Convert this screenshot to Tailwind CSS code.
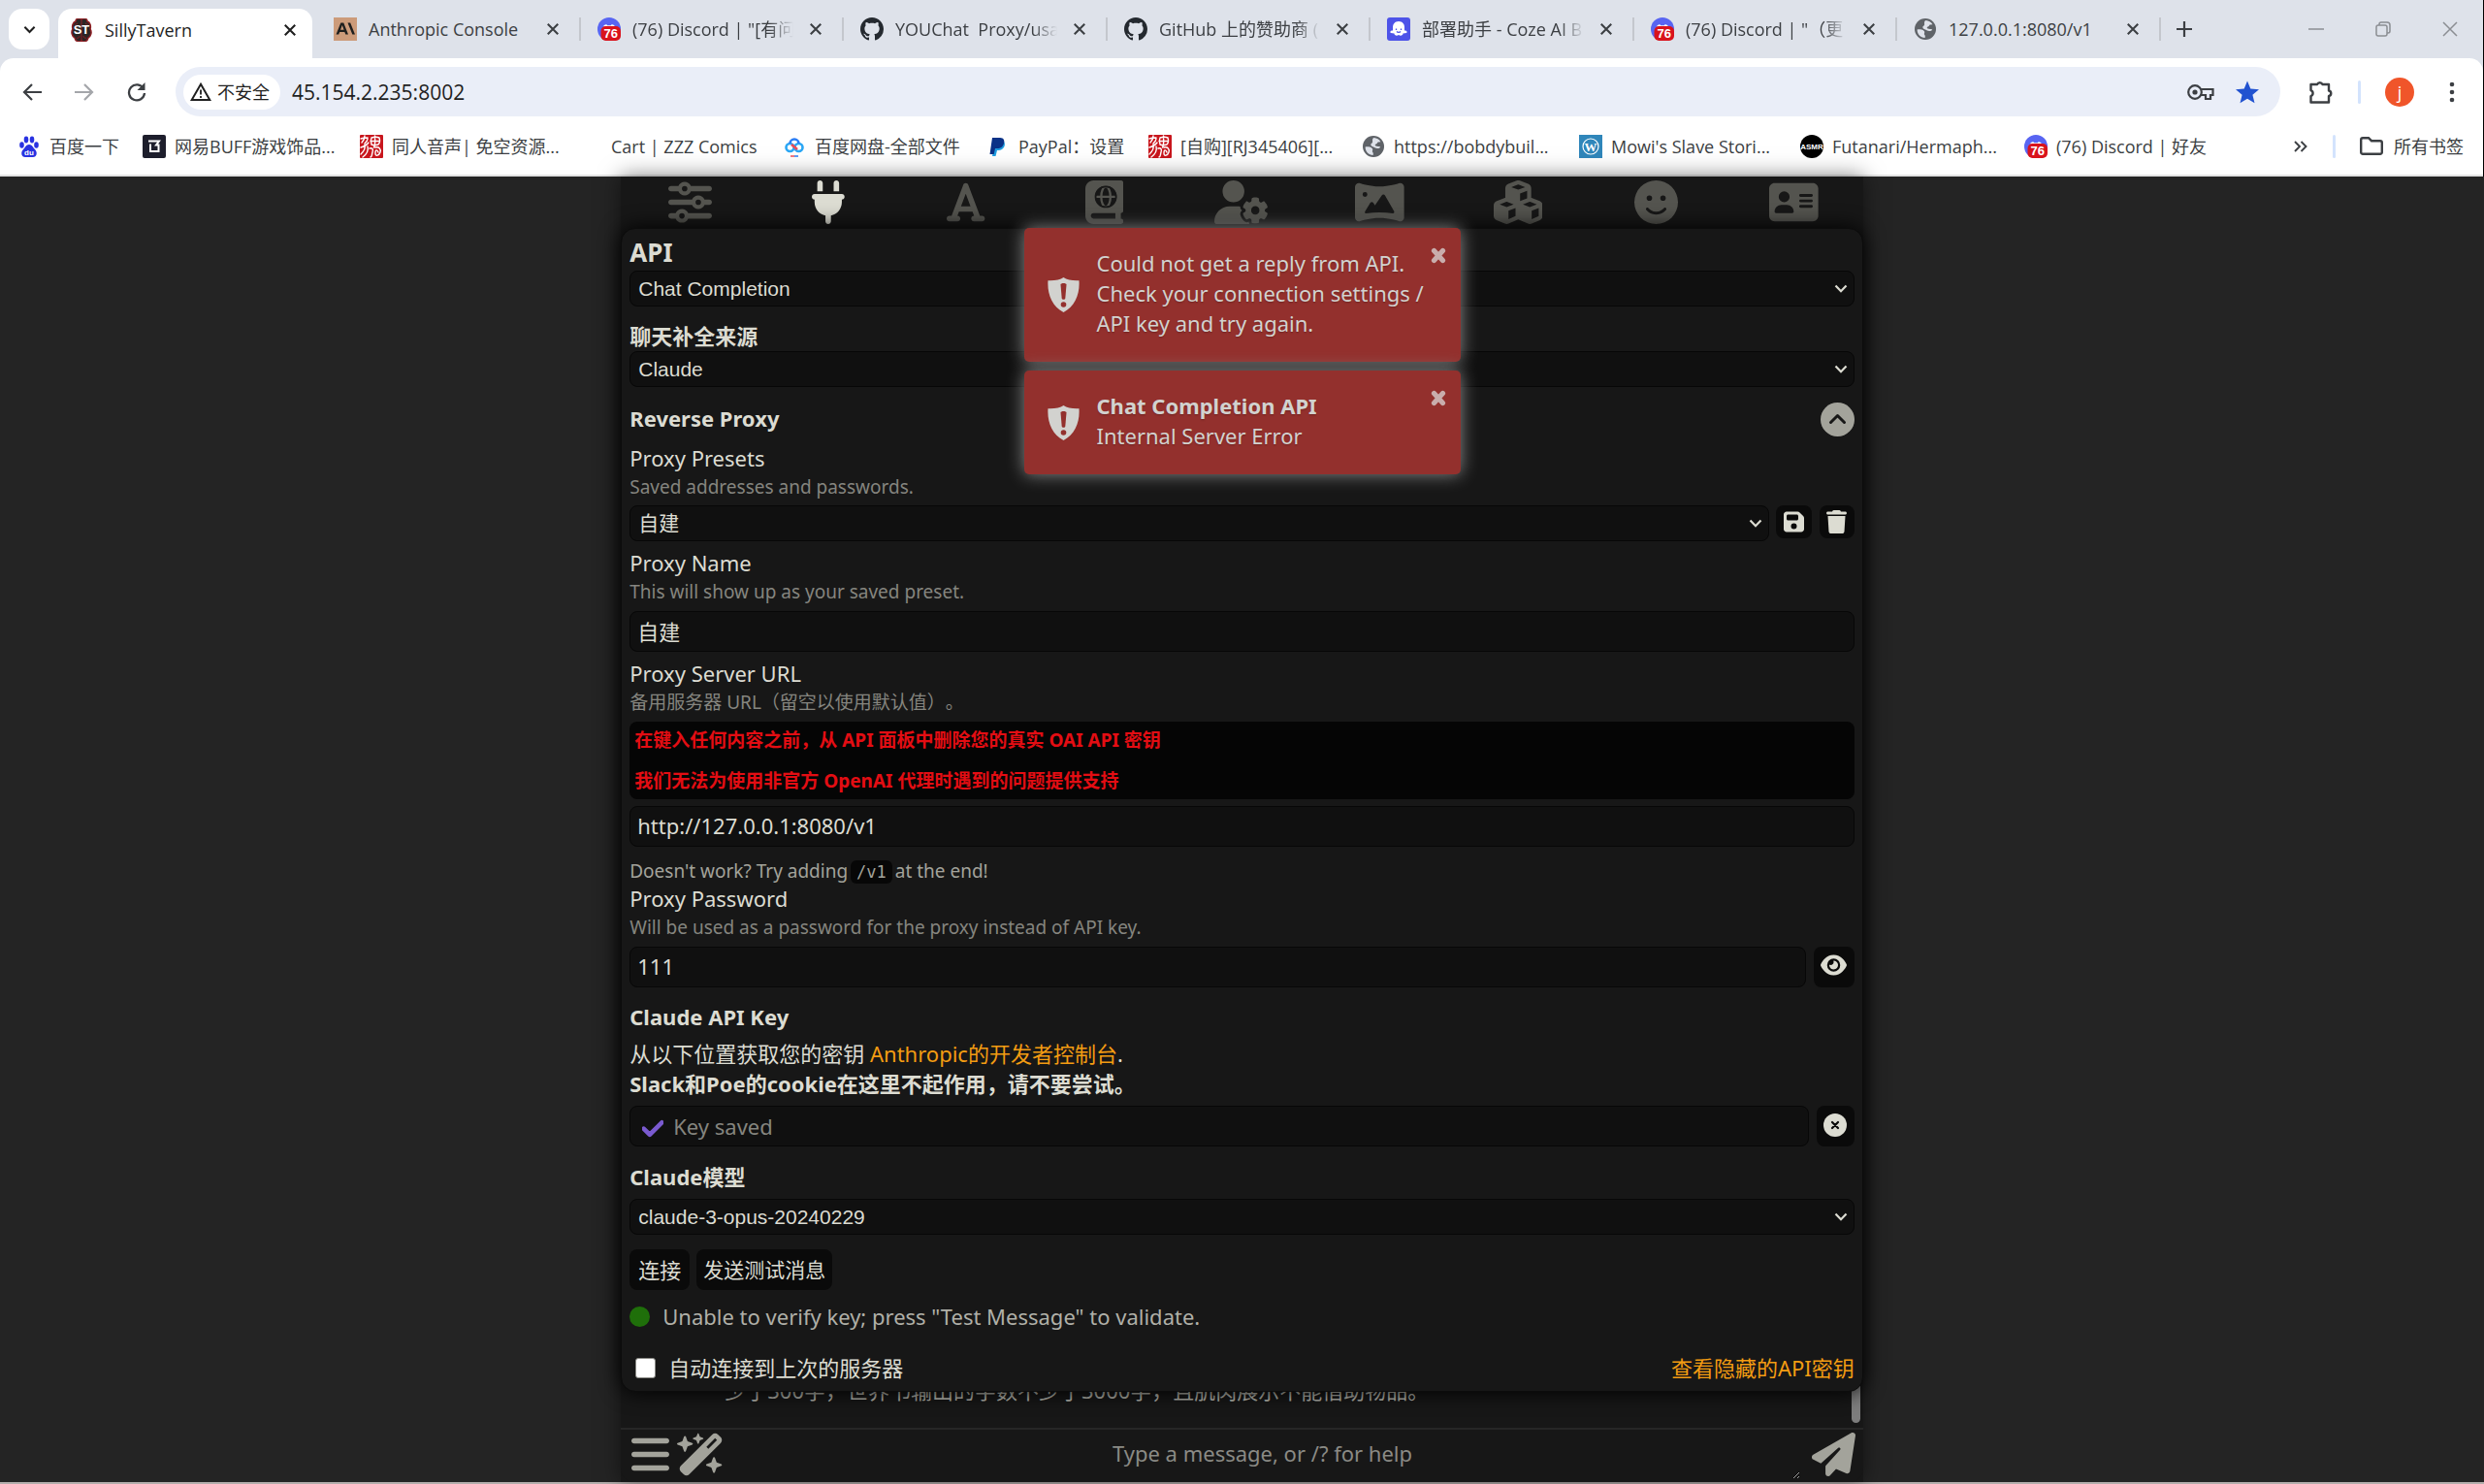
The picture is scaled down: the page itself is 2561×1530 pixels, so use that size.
<!DOCTYPE html>
<html lang="zh-CN">
<head>
    <meta charset="UTF-8">
    <meta name="viewport" content="width=device-width, initial-scale=1.0">
    <title>SillyTavern</title>
    <script src="https://cdn.jsdelivr.net/npm/@tailwindcss/browser@4"></script>
</head>
<body class="h-screen flex flex-col overflow-hidden bg-[#242424] font-['Noto_Sans','Noto_Sans_CJK_SC',sans-serif] [text-spacing-trim:space-all]">
    <!-- shared icons -->
    <svg class="hidden">
        <symbol id="i-close" viewBox="0 0 12 12"><path d="M1.5 1.5l9 9M10.5 1.5l-9 9" stroke="currentColor" stroke-width="1.8" fill="none"/></symbol>
        <symbol id="i-github" viewBox="0 0 16 16"><path fill="#24292f" d="M8 0C3.58 0 0 3.58 0 8c0 3.54 2.29 6.53 5.47 7.59.4.07.55-.17.55-.38 0-.19-.01-.82-.01-1.49-2.01.37-2.53-.49-2.69-.94-.09-.23-.48-.94-.82-1.13-.28-.15-.68-.52-.01-.53.63-.01 1.08.58 1.23.82.72 1.21 1.87.87 2.33.66.07-.52.28-.87.51-1.07-1.78-.2-3.64-.89-3.64-3.95 0-.87.31-1.59.82-2.15-.08-.2-.36-1.02.08-2.12 0 0 .67-.21 2.2.82.64-.18 1.32-.27 2-.27s1.36.09 2 .27c1.53-1.04 2.2-.82 2.2-.82.44 1.1.16 1.92.08 2.12.51.56.82 1.27.82 2.15 0 3.07-1.87 3.75-3.65 3.95.29.25.54.73.54 1.48 0 1.07-.01 1.93-.01 2.2 0 .21.15.46.55.38A8.01 8.01 0 0 0 16 8c0-4.42-3.58-8-8-8z"/></symbol>
        <symbol id="i-discord" viewBox="0 0 24 24">
            <circle cx="12" cy="12" r="12" fill="#5865f2"/>
            <path d="M6 9.5c0-1.5 2.4-2.6 3.4-2.2l.8 1h3.6l.8-1c1-.4 3.4.7 3.4 2.2z" fill="#fff"/>
            <rect x="3.5" y="9" width="20.5" height="15" rx="5" fill="#d9131c"/>
            <text x="13.8" y="21" text-anchor="middle" font-family="Liberation Sans" font-weight="bold" font-size="13" fill="#fff">76</text>
        </symbol>
        <symbol id="i-globe" viewBox="0 0 24 24">
            <circle cx="12" cy="12" r="11" fill="#5f6368"/>
            <path d="M4.5 12.2c3 0 5 .3 6.200 1.700 1.400 1.600-.6 2.600.6 4.100.8 1 .5 2.300.3 3-4.600-.2-8-4-8-8.600zM12.500 3c3 .2 5.500 1.700 7 4.200l-2.600.3c-1 .1-.8 1.800-2 2-1.500.300-1.400 1.500-.4 2 1.600.8 3.300-.2 4.800 1.300-1.200 1.400-4 1.800-5.800.5-2-1.400-4-1-4.200-3 0-1.500 1.700-1.500 1.800-3 0-1.700-.6-3.300 1.400-4.300z" fill="#dee2ea"/>
        </symbol>
        <symbol id="i-seal" viewBox="0 0 24 24">
            <rect width="24" height="24" rx="1" fill="#c8161d"/>
            <path d="M1 4c2-1 4-1 7-1M5 1c0 3-1 5-3 7M8 4c0 2-1 3-3 5M1 13c3-1 6-2 8-5M5 10c1 3-1 7-4 10M8 12c1 4-1 8-5 11M12 3c3-1 6-1 8 0 1 3 1 5-1 7-3 1-5 1-7 0-1-3-1-5 0-7zM11 6.500h9M15.500 1c0 4 1 8-1 12M10 14c3-1 4 1 3 4s0 4-2 5M16 13c4-1 6 2 5 5s-5 5-5 1 2-4 3-1" stroke="#fff" stroke-width="1.400" stroke-linecap="round" fill="none"/>
        </symbol>
        <symbol id="i-down" viewBox="0 0 14 9"><path d="M1.500 1.500L7 7.200l5.500-5.700" stroke="currentColor" stroke-width="2.200" fill="none"/></symbol>
        <symbol id="i-shield" viewBox="0 0 33 36">
            <path d="M16.500 0c3.500 2.400 9.500 3.600 16 3.200C33.500 17 28.500 30 16.500 36 4.500 30-.5 17 .5 3.200 7 3.600 13 2.400 16.500 0z" fill="currentColor"/>
            <path d="M13.500 7.500c0-2 6-2 6 0l-1.200 14c-.2 1.800-3.400 1.800-3.600 0z" fill="#93302d"/>
            <circle cx="16.500" cy="28" r="2.800" fill="#93302d"/>
        </symbol>
        <symbol id="i-x" viewBox="0 0 16 17"><path d="M3.500 3.500l9 10M12.500 3.500l-9 10" stroke="currentColor" stroke-width="5.200" stroke-linecap="round"/></symbol>
    </svg>

    <!-- browser chrome -->
    <header class="shrink-0 bg-[#dee2ea] border-r border-black font-['Open_Sans','Noto_Sans_CJK_SC',sans-serif] text-[18px] leading-6 text-[#3c3f43]">
        <div class="flex items-center h-[60px] pl-[9px] overflow-hidden">
            <button class="flex items-center justify-center size-[42px] rounded-[14px] bg-white text-[#1f1f1f]" aria-label="搜索标签页">
                <svg class="w-[13px] h-[9px]"><use href="#i-down"/></svg>
            </button>
            <div class="flex items-center self-end w-[262px] h-[51px] ml-[9px] pl-3 pr-4 pb-2 rounded-t-[14px] bg-white text-[#1f1f1f]">
                <svg class="size-6 shrink-0" viewBox="0 0 24 24">
                    <path d="M12 1c2-2 6-1 6 2 3 1 4 5 3 8 2 3 1 7-2 9-1 4-5 5-7 3-2 2-6 1-7-3-3-2-4-6-2-9-1-3 0-7 3-8 0-3 4-4 6-2z" fill="#2b2626" stroke="#8d1f24" stroke-width="1.500"/>
                    <path d="M12 1v22M8 5c-3 1-3 4-1 4M16 5c3 1 3 4 1 4M7 20c2 1 3-1 3-2M17 20c-2 1-3-1-3-2" stroke="#8d1f24" fill="none"/>
                    <text x="12" y="16" text-anchor="middle" font-family="Liberation Sans" font-weight="bold" font-size="13" fill="#fff">ST</text>
                </svg>
                <span class="flex-1 ml-3">SillyTavern</span>
                <button aria-label="关闭"><svg class="size-[14px]"><use href="#i-close"/></svg></button>
            </div>
            <div class="flex items-center flex-1">
                <div class="flex items-center w-[277px] h-6 pl-[22px] pr-5 border-r-2 border-[#c4c7cd]">
                    <svg class="size-6 shrink-0" viewBox="0 0 24 24"><rect width="24" height="24" fill="#cc9b7a"/><path d="M2.500 17.500L7.300 5.500h3l4.700 12h-2.700l-1-2.600H6.200l-1 2.600zM7 12.700h3.600L8.800 8zM14.500 5.500h2.700l4.800 12h-2.700z" fill="#1f1f1e"/></svg>
                    <span class="flex-1 ml-3 overflow-hidden whitespace-nowrap">Anthropic Console</span>
                    <button class="ml-2" aria-label="关闭"><svg class="size-[14px]"><use href="#i-close"/></svg></button>
                </div>
                <div class="flex items-center w-[271px] h-6 pl-[17px] pr-5 border-r-2 border-[#c4c7cd]">
                    <svg class="size-6 shrink-0"><use href="#i-discord"/></svg>
                    <span class="flex-1 ml-3 overflow-hidden whitespace-nowrap mask-r-from-85% mask-r-to-100%">(76) Discord | "[有问</span>
                    <button class="ml-4" aria-label="关闭"><svg class="size-[14px]"><use href="#i-close"/></svg></button>
                </div>
                <div class="flex items-center w-[272px] h-6 pl-[17px] pr-5 border-r-2 border-[#c4c7cd]">
                    <svg class="size-6 shrink-0"><use href="#i-github"/></svg>
                    <span class="flex-1 ml-3 overflow-hidden whitespace-nowrap mask-r-from-85% mask-r-to-100%">YOUChat&nbsp; Proxy/usa</span>
                    <button class="ml-4" aria-label="关闭"><svg class="size-[14px]"><use href="#i-close"/></svg></button>
                </div>
                <div class="flex items-center w-[271px] h-6 pl-[17px] pr-5 border-r-2 border-[#c4c7cd]">
                    <svg class="size-6 shrink-0"><use href="#i-github"/></svg>
                    <span class="flex-1 ml-3 overflow-hidden whitespace-nowrap mask-r-from-85% mask-r-to-100%">GitHub 上的赞助商 (</span>
                    <button class="ml-4" aria-label="关闭"><svg class="size-[14px]"><use href="#i-close"/></svg></button>
                </div>
                <div class="flex items-center w-[272px] h-6 pl-[17px] pr-5 border-r-2 border-[#c4c7cd]">
                    <svg class="size-6 shrink-0" viewBox="0 0 24 24"><rect width="24" height="24" rx="3" fill="#4d53e8"/><path d="M12 4c4 0 6 3 6 6v3.500c2-.5 3.500 1.500 2 2.500l-3.500.5c0 2-2.500 3-4.500 1.500-2 1.500-4.500.5-4.500-1.500L4 16c-1.500-1 0-3 2-2.500V10c0-3 2-6 6-6z" fill="#fff"/><path d="M9.500 11.500v1.500M14.500 11.500v1.500M10 14.500c1 1.200 3 1.200 4 0" stroke="#4d53e8" stroke-width="1.300" fill="none"/></svg>
                    <span class="flex-1 ml-3 overflow-hidden whitespace-nowrap mask-r-from-85% mask-r-to-100%">部署助手 - Coze AI B</span>
                    <button class="ml-4" aria-label="关闭"><svg class="size-[14px]"><use href="#i-close"/></svg></button>
                </div>
                <div class="flex items-center w-[271px] h-6 pl-[17px] pr-5 border-r-2 border-[#c4c7cd]">
                    <svg class="size-6 shrink-0"><use href="#i-discord"/></svg>
                    <span class="flex-1 ml-3 overflow-hidden whitespace-nowrap mask-r-from-85% mask-r-to-100%">(76) Discord | "（更</span>
                    <button class="ml-4" aria-label="关闭"><svg class="size-[14px]"><use href="#i-close"/></svg></button>
                </div>
                <div class="flex items-center w-[272px] h-6 pl-[17px] pr-5 border-r-2 border-[#c4c7cd]">
                    <svg class="size-6 shrink-0"><use href="#i-globe"/></svg>
                    <span class="flex-1 ml-3 overflow-hidden whitespace-nowrap">127.0.0.1:8080/v1</span>
                    <button class="ml-4" aria-label="关闭"><svg class="size-[14px]"><use href="#i-close"/></svg></button>
                </div>
                <button class="ml-4" aria-label="新标签页"><svg class="size-4" viewBox="0 0 16 16"><path d="M8 0v16M0 8h16" stroke="#3c3f43" stroke-width="2.200"/></svg></button>
            </div>
            <div class="flex items-center gap-[53px] pr-[26px] text-[#8b8e93]">
                <button aria-label="最小化"><svg class="size-4" viewBox="0 0 16 16"><path d="M0 8h16" stroke="currentColor" stroke-width="1.500"/></svg></button>
                <button aria-label="还原"><svg class="size-4" viewBox="0 0 16 16"><rect x="1" y="4" width="11" height="11" rx="2" fill="none" stroke="currentColor" stroke-width="1.500"/><path d="M4 4V3a2 2 0 0 1 2-2h6a3 3 0 0 1 3 3v6a2 2 0 0 1-2 2h-1" fill="none" stroke="currentColor" stroke-width="1.500"/></svg></button>
                <button aria-label="关闭窗口"><svg class="size-4" viewBox="0 0 16 16"><path d="M1 1l14 14M15 1L1 15" stroke="currentColor" stroke-width="1.500"/></svg></button>
            </div>
        </div>

        <div class="rounded-t-[14px] bg-white border-b-2 border-[#e3e3e3]">
            <div class="flex items-center h-[69px] pl-[23px] pr-[29px]">
                <button aria-label="后退"><svg class="w-5 h-[18px]" viewBox="0 0 20 18"><path d="M10 1L2 9l8 8M2 9h18" stroke="#3c3f43" stroke-width="2.200" fill="none"/></svg></button>
                <button class="ml-[34px]" aria-label="前进"><svg class="w-5 h-[18px]" viewBox="0 0 20 18"><path d="M10 1l8 8-8 8M18 9H0" stroke="#a4a6aa" stroke-width="2.200" fill="none"/></svg></button>
                <button class="ml-[34px]" aria-label="重新加载"><svg class="size-5" viewBox="0 0 20 20"><path d="M17 6.500A8 8 0 1 0 18 11" stroke="#3c3f43" stroke-width="2.300" fill="none"/><path d="M18.500 0v8h-8z" fill="#3c3f43"/></svg></button>
                <div class="flex items-center flex-1 h-[51px] ml-[30px] pl-2 pr-[22px] rounded-full bg-[#eaeef8] text-[#1f1f1f]">
                    <span class="flex items-center gap-[6px] h-9 px-[7px] pr-[11px] rounded-full bg-white">
                        <svg class="w-[22px] h-[19px]" viewBox="0 0 22 19"><path d="M11 1.800L20.300 18H1.700z" stroke="#1f1f1f" stroke-width="2" fill="none"/><path d="M11 7.500v5M11 14v2" stroke="#1f1f1f" stroke-width="1.800"/></svg>
                        不安全
                    </span>
                    <label class="sr-only" for="address">地址</label>
                    <input id="address" class="flex-1 ml-3 text-[21px] outline-none" value="45.154.2.235:8002">
                    <svg class="w-7 h-[18px]" viewBox="0 0 28 18"><circle cx="8" cy="9" r="6.800" stroke="#3c3f43" stroke-width="2.200" fill="none"/><circle cx="8" cy="9" r="2.600" fill="#3c3f43"/><path d="M14 6h12.500v6H24v4h-5v-4h-5" stroke="#3c3f43" stroke-width="2.200" fill="none"/></svg>
                    <svg class="size-6 ml-[22px]" viewBox="0 0 24 24"><path d="M12 .5l3.300 8 8.700.7-6.600 5.600 2.100 8.500L12 18.700l-7.500 4.600 2.100-8.500L0 9.200l8.700-.7z" fill="#2152d0"/></svg>
                </div>
                <button class="ml-[29px]" aria-label="扩展程序"><svg class="size-[25px]" viewBox="0 0 25 25"><path d="M2.500 5h6.500a3 3 0 0 1 5.500 0H21v6.500a2.800 2.800 0 0 1 0 5.500v6.500H2.500V17a3.200 3.200 0 0 0 0-6z" stroke="#3c3f43" stroke-width="2.400" stroke-linejoin="round" fill="none"/></svg></button>
                <span class="w-[3px] h-6 ml-[26px] rounded bg-[#d3e3fd]"></span>
                <button class="flex items-center justify-center size-[30px] ml-[25px] rounded-full bg-[#f0552a] text-white">j</button>
                <button class="ml-9" aria-label="菜单"><svg class="w-[6px] h-[22px]" viewBox="0 0 6 22"><g fill="#3c3f43"><circle cx="3" cy="3" r="2.300"/><circle cx="3" cy="11" r="2.300"/><circle cx="3" cy="19" r="2.300"/></g></svg></button>
            </div>
            <nav class="flex items-center h-[51px] pb-2 pl-[18px] pr-5 whitespace-nowrap">
                <a href="#" class="flex items-center gap-[9px] w-[129px]">
                    <svg class="size-6 shrink-0" viewBox="0 0 24 24"><g fill="#2932e1"><ellipse cx="4.500" cy="10.500" rx="2.300" ry="3.200"/><ellipse cx="9" cy="5" rx="2.300" ry="3.400"/><ellipse cx="15" cy="5" rx="2.300" ry="3.400"/><ellipse cx="19.500" cy="10.500" rx="2.300" ry="3.200"/><path d="M12 10c3 0 4 3 6 5 3 3 2 8-2 8H8c-4 0-5-5-2-8 2-2 3-5 6-5z"/></g><text x="12" y="20.500" text-anchor="middle" font-family="Liberation Sans" font-weight="bold" font-size="8" fill="#fff">du</text></svg>
                    百度一下
                </a>
                <a href="#" class="flex items-center gap-[9px] w-[224px]">
                    <svg class="size-6 shrink-0" viewBox="0 0 24 24"><rect width="24" height="24" rx="2" fill="#1d1e2c"/><path d="M6 6.500h11l-3 4h2.500V17H8V9.500" stroke="#fff" stroke-width="2" fill="none"/></svg>
                    网易BUFF游戏饰品...
                </a>
                <a href="#" class="flex items-center gap-[9px] w-[226px]"><svg class="size-6 shrink-0"><use href="#i-seal"/></svg>同人音声| 免空资源...</a>
                <a href="#" class="flex items-center w-[210px] pl-[33px]">Cart | ZZZ Comics</a>
                <a href="#" class="flex items-center gap-[9px] w-[210px]">
                    <svg class="size-6 shrink-0" viewBox="0 0 24 24"><g fill="none" stroke-width="2.600"><circle cx="7.500" cy="13" r="4" stroke="#2ba7f5"/><circle cx="16.500" cy="13" r="4" stroke="#2ba7f5"/><path d="M7.500 9a4.500 4.500 0 1 1 9 0" stroke="#2b7df5"/><path d="M9 10l6 5" stroke="#ef4c57"/></g><path d="M8 22h4" stroke="#ef4c57" stroke-width="1.500"/><path d="M12 22h4" stroke="#2b7df5" stroke-width="1.500"/></svg>
                    百度网盘-全部文件
                </a>
                <a href="#" class="flex items-center gap-[9px] w-[167px]">
                    <svg class="size-6 shrink-0" viewBox="0 0 24 24"><path d="M9 7h9c2 2 1 8-5 9h-2l-1.500 6H6z" fill="#1e9de0"/><path d="M6 3h8c4 0 5 3 4 6s-3 5-7 5H9l-1.300 6H3.500z" fill="#0b3287"/></svg>
                    PayPal：设置
                </a>
                <a href="#" class="flex items-center gap-[9px] w-[220px]"><svg class="size-6 shrink-0"><use href="#i-seal"/></svg>[自购][RJ345406][...</a>
                <a href="#" class="flex items-center gap-[9px] w-[224px]"><svg class="size-6 shrink-0"><use href="#i-globe"/></svg>https://bobdybuil...</a>
                <a href="#" class="flex items-center gap-[9px] w-[228px]">
                    <svg class="size-6 shrink-0" viewBox="0 0 24 24"><rect width="24" height="24" fill="#2f86ba"/><circle cx="12" cy="12" r="8" fill="none" stroke="#fff" stroke-width="1.200"/><text x="12" y="16.500" text-anchor="middle" font-family="Liberation Serif" font-weight="bold" font-size="13" fill="#fff">W</text></svg>
                    Mowi's Slave Stori...
                </a>
                <a href="#" class="flex items-center gap-[9px] w-[231px]">
                    <svg class="size-6 shrink-0" viewBox="0 0 24 24"><circle cx="12" cy="12" r="12" fill="#000"/><text x="12" y="15" text-anchor="middle" font-family="Liberation Sans" font-weight="bold" font-size="8" fill="#fff">ASMR</text></svg>
                    Futanari/Hermaph...
                </a>
                <a href="#" class="flex items-center gap-[9px] flex-1"><svg class="size-6 shrink-0"><use href="#i-discord"/></svg>(76) Discord | 好友</a>
                <button aria-label="更多书签"><svg class="w-[14px] h-3" viewBox="0 0 14 12"><path d="M1 1l5 5-5 5M7.500 1l5 5-5 5" stroke="#3c3f43" stroke-width="1.900" fill="none"/></svg></button>
                <span class="w-[3px] h-6 ml-[26px] mr-[25px] rounded bg-[#d3e3fd]"></span>
                <a href="#" class="flex items-center gap-[11px]">
                    <svg class="w-6 h-[19px]" viewBox="0 0 24 19"><path d="M1.200 3a1.800 1.800 0 0 1 1.800-1.800h6l3 3h9A1.800 1.800 0 0 1 22.800 6v10a1.800 1.800 0 0 1-1.800 1.800H3A1.800 1.800 0 0 1 1.200 16z" stroke="#3c3f43" stroke-width="2.400" fill="none"/></svg>
                    所有书签
                </a>
            </nav>
        </div>
    </header>

    <!-- app -->
    <main class="flex flex-col flex-1 min-h-0 relative w-1/2 mx-auto bg-[#171717] text-[#dcdcd2] text-[22px] leading-[31px] shadow-[0_0_21px_rgba(0,0,0,0.5)]">
        <nav class="grid grid-cols-9 place-items-center shrink-0 h-[53px] text-[#54544f]">
            <svg class="size-[45px]" viewBox="0 0 512 512" fill="currentColor"><path d="M0 416c0 17.700 14.300 32 32 32l54.700 0c12.300 28.300 40.500 48 73.300 48s61-19.700 73.300-48L480 448c17.700 0 32-14.300 32-32s-14.300-32-32-32l-246.700 0c-12.300-28.300-40.500-48-73.300-48s-61 19.700-73.300 48L32 384c-17.700 0-32 14.300-32 32zm128 0a32 32 0 1 1 64 0 32 32 0 1 1 -64 0zM320 256a32 32 0 1 1 64 0 32 32 0 1 1 -64 0zm32-80c-32.800 0-61 19.700-73.300 48L32 224c-17.700 0-32 14.300-32 32s14.300 32 32 32l246.700 0c12.300 28.300 40.500 48 73.300 48s61-19.700 73.300-48l54.700 0c17.700 0 32-14.300 32-32s-14.300-32-32-32l-54.700 0c-12.300-28.300-40.500-48-73.300-48zM192 128a32 32 0 1 1 0-64 32 32 0 1 1 0 64zm73.300-64C253 35.700 224.800 16 192 16s-61 19.700-73.300 48L32 64C14.300 64 0 78.300 0 96s14.300 32 32 32l86.700 0c12.300 28.300 40.500 48 73.300 48s61-19.700 73.300-48L480 128c17.700 0 32-14.300 32-32s-14.300-32-32-32L265.300 64z"/></svg>
            <svg class="h-[45px] text-[#dcdcd2]" viewBox="0 0 384 512" fill="currentColor"><path d="M96 0C78.300 0 64 14.300 64 32l0 96 64 0 0-96c0-17.700-14.300-32-32-32zM288 0c-17.700 0-32 14.300-32 32l0 96 64 0 0-96c0-17.700-14.300-32-32-32zM32 160c-17.700 0-32 14.300-32 32s14.300 32 32 32l0 32c0 77.400 55 142 128 156.800l0 67.200c0 17.700 14.300 32 32 32s32-14.300 32-32l0-67.200C297 398 352 333.400 352 256l0-32c17.700 0 32-14.300 32-32s-14.300-32-32-32L32 160z"/></svg>
            <svg class="h-[45px]" viewBox="0 0 448 512" fill="currentColor"><path d="M254 52.800C249.300 40.300 237.300 32 224 32s-25.300 8.300-30 20.800L57.800 416 32 416c-17.700 0-32 14.300-32 32s14.300 32 32 32l96 0c17.700 0 32-14.300 32-32s-14.300-32-32-32l-1.800 0 18-48 159.600 0 18 48-1.800 0c-17.700 0-32 14.300-32 32s14.300 32 32 32l96 0c17.700 0 32-14.300 32-32s-14.300-32-32-32l-25.800 0L254 52.800zM279.800 304l-111.600 0L224 155.100 279.800 304z"/></svg>
            <svg class="h-[45px]" viewBox="0 0 448 512"><path fill="currentColor" fill-rule="evenodd" d="M0 96C0 43 43 0 96 0H416c17.700 0 32 14.300 32 32V352c0 17.700-14.300 32-32 32v64c17.700 0 32 14.300 32 32s-14.300 32-32 32H96c-53 0-96-43-96-96V96zM64 416c0 17.700 14.300 32 32 32H352V384H96c-17.700 0-32 14.300-32 32z"/><circle cx="240" cy="192" r="126" fill="#171717"/><g fill="none" stroke="currentColor" stroke-width="26"><path d="M114 192h252"/><ellipse cx="240" cy="192" rx="54" ry="120"/></g><circle cx="240" cy="192" r="120" fill="none" stroke="#171717" stroke-width="20"/></svg>
            <svg class="h-[45px]" viewBox="0 0 640 512" fill="currentColor"><path d="M224 0a128 128 0 1 1 0 256A128 128 0 1 1 224 0zM178.300 304h91.400c11.800 0 23.400 1.200 34.500 3.300c-2.100 18.500 7.400 35.600 21.800 44.800c-16.600 10.600-26.700 31.600-20 53.300c4 12.900 9.400 25.500 16.400 37.600s15.200 23.100 24.400 33c15.700 16.900 39.600 18.400 57.200 8.700v.9c0 9.200 2.700 18.500 7.900 26.300H29.700C13.300 512 0 498.700 0 482.300C0 383.800 79.800 304 178.300 304zM436 218.200c0-7 4.500-13.300 11.300-14.800c10.500-2.400 21.500-3.700 32.700-3.700s22.200 1.300 32.700 3.700c6.800 1.500 11.300 7.800 11.300 14.800v17.700c0 7.800 4.800 14.800 11.600 18.700c6.800 3.900 15.100 4.500 21.800 .6l13.800-7.900c6.100-3.500 13.700-2.700 18.500 2.400c7.600 8.100 14.300 17.200 20.100 27.200s10.300 20.400 13.500 31c2.100 6.700-1.100 13.700-7.200 17.200l-14.400 8.300c-6.500 3.700-10 10.900-10 18.400s3.500 14.700 10 18.400l14.400 8.300c6.100 3.500 9.200 10.500 7.200 17.200c-3.300 10.600-7.800 21-13.500 31s-12.500 19.100-20.100 27.200c-4.800 5.100-12.500 5.900-18.500 2.400l-13.800-7.900c-6.700-3.900-15.100-3.300-21.800 .6c-6.800 3.900-11.600 10.900-11.600 18.700v17.700c0 7-4.500 13.300-11.300 14.800c-10.500 2.400-21.500 3.700-32.700 3.700s-22.200-1.300-32.700-3.700c-6.800-1.500-11.300-7.800-11.300-14.800V467.800c0-7.900-4.900-14.900-11.700-18.900c-6.800-3.900-15.200-4.500-22-.6l-13.500 7.800c-6.100 3.500-13.700 2.700-18.500-2.400c-7.600-8.100-14.300-17.200-20.100-27.200s-10.300-20.400-13.500-31c-2.100-6.700 1.100-13.700 7.200-17.200l14-8.100c6.500-3.800 10.100-11.100 10.100-18.600s-3.500-14.800-10.100-18.600l-14-8.100c-6.100-3.500-9.200-10.500-7.200-17.200c3.300-10.600 7.700-21 13.500-31s12.500-19.100 20.100-27.200c4.800-5.100 12.400-5.900 18.500-2.400l13.600 7.800c6.800 3.900 15.200 3.300 22-.6c6.900-3.900 11.700-11 11.700-18.900V218.200zm92.100 133.500a48.100 48.100 0 1 0 -96.100 0 48.100 48.100 0 1 0 96.100 0z"/></svg>
            <svg class="h-[45px]" viewBox="0 0 576 512" fill="currentColor" fill-rule="evenodd"><path d="M45.600 32C20.400 32 0 52.400 0 77.600V434.400C0 459.600 20.400 480 45.600 480c5.100 0 10-.8 14.700-2.400C74.600 472.800 177.600 440 288 440s213.400 32.800 227.700 37.600c4.700 1.600 9.700 2.400 14.700 2.400C555.600 480 576 459.600 576 434.400V77.600C576 52.400 555.600 32 530.400 32c-5.100 0-10 .8-14.700 2.400C501.400 39.200 398.400 72 288 72S74.600 39.200 60.300 34.400C55.600 32.800 50.700 32 45.600 32zM333 166c7 0 14 4 19 11L458 362c6 13-1 27-16 25-100-14-208-14-308 0-15 2-23-12-16-24l62-100c9-13 25-13 34 0l20 30 80-116c5-7 12-11 19-11zM117 136a28 28 0 1 1 0 56 28 28 0 1 1 0-56z"/></svg>
            <svg class="h-[45px]" viewBox="0 0 576 512" fill="currentColor"><path d="M290.800 48.600l78.400 29.700L288 109.500 206.800 78.300l78.400-29.700c1.800-.7 3.800-.7 5.700 0zM136 92.500V204.700c-1.300 .4-2.600 .8-3.900 1.300l-96 36.400C14.400 250.600 0 271.500 0 294.700V413.900c0 22.200 13.100 42.300 33.500 51.300l96 42.200c14.400 6.300 30.700 6.300 45.100 0L288 457.500l113.500 49.900c14.400 6.300 30.700 6.300 45.100 0l96-42.200c20.300-8.900 33.500-29.100 33.500-51.300V294.700c0-23.300-14.400-44.100-36.100-52.400l-96-36.400c-1.300-.5-2.600-.9-3.900-1.300V92.500c0-23.300-14.400-44.100-36.100-52.400l-96-36.400c-12.800-4.800-26.900-4.800-39.700 0l-96 36.400C150.400 48.400 136 69.300 136 92.500zM392 210.600l-82.400 31.200V152.600L392 121v89.600zM154.800 250.900l78.400 29.700L152 311.700 70.800 280.600l78.400-29.700c1.800-.7 3.800-.7 5.700 0zm18.800 204.400V354.800L256 323.200v95.900l-82.400 36.200zM421.200 250.900c1.800-.7 3.800-.7 5.700 0l78.400 29.700L424 311.700l-81.200-31.100 78.400-29.700zM523.200 421.200l-77.600 34.100V354.800L528 323.200v90.700c0 3.200-1.900 6-4.800 7.300z"/></svg>
            <svg class="h-[45px]" viewBox="0 0 512 512" fill="currentColor"><path d="M256 512A256 256 0 1 0 256 0a256 256 0 1 0 0 512zM164.100 325.500C182 346.200 212.600 368 256 368s74-21.800 91.900-42.500c5.800-6.700 15.900-7.400 22.600-1.600s7.400 15.900 1.600 22.600C349.800 372.100 311.100 400 256 400s-93.800-27.900-116.100-53.500c-5.800-6.700-5.100-16.800 1.600-22.600s16.800-5.100 22.600 1.600zM144.400 208a32 32 0 1 1 64 0 32 32 0 1 1 -64 0zm192-32a32 32 0 1 1 0 64 32 32 0 1 1 0-64z"/></svg>
            <svg class="h-[45px]" viewBox="0 0 576 512" fill="currentColor"><path d="M64 32C28.700 32 0 60.700 0 96V416c0 35.300 28.700 64 64 64H512c35.300 0 64-28.700 64-64V96c0-35.300-28.700-64-64-64H64zm80 256h64c44.200 0 80 35.800 80 80c0 8.800-7.200 16-16 16H80c-8.800 0-16-7.200-16-16c0-44.200 35.800-80 80-80zm-32-96a64 64 0 1 1 128 0 64 64 0 1 1 -128 0zm256-32H496c8.800 0 16 7.200 16 16s-7.200 16-16 16H368c-8.800 0-16-7.200-16-16s7.200-16 16-16zm0 64H496c8.800 0 16 7.200 16 16s-7.200 16-16 16H368c-8.800 0-16-7.200-16-16s7.200-16 16-16zm0 64H496c8.800 0 16 7.200 16 16s-7.200 16-16 16H368c-8.800 0-16-7.200-16-16s7.200-16 16-16z"/></svg>
        </nav>

        <!-- chat behind the drawer -->
        <section class="flex flex-col justify-end flex-1 min-h-0 pb-[23px] pl-[107px] pr-[3px] text-[#b5b5ad]">
            <div class="flex items-end">
                <p class="flex-1">少于300字，世界书输出的字数不少于3000字，且肌肉展示不能借助物品。</p>
                <div class="w-[9px] h-20 -mb-[18px] rounded-full bg-[#7d7d7d]"></div>
            </div>
        </section>

        <form class="flex items-center shrink-0 h-[56px] pl-[11px] pr-2 pb-[3px] border-t-2 border-[#262626] bg-[#171717] rounded-b-[14px] text-[#a3a39b]">
            <button type="button" aria-label="选项"><svg class="w-[39px] h-[45px]" viewBox="0 0 448 512" fill="currentColor"><path d="M0 96C0 78.300 14.300 64 32 64H416c17.700 0 32 14.300 32 32s-14.300 32-32 32H32C14.300 128 0 113.700 0 96zM0 256c0-17.700 14.300-32 32-32H416c17.700 0 32 14.300 32 32s-14.300 32-32 32H32c-17.700 0-32-14.300-32-32zM448 416c0 17.700-14.300 32-32 32H32c-17.700 0-32-14.300-32-32s14.300-32 32-32H416c17.700 0 32 14.300 32 32z"/></svg></button>
            <button type="button" class="ml-2" aria-label="扩展"><svg class="w-[49px] h-[45px]" viewBox="0 0 576 512" fill="currentColor"><path d="M234.700 42.700L197 56.800c-3 1.100-5 4-5 7.200s2 6.100 5 7.200l37.700 14.100L248.800 123c1.100 3 4 5 7.200 5s6.100-2 7.200-5l14.100-37.700L315 71.200c3-1.100 5-4 5-7.200s-2-6.100-5-7.200L277.300 42.700 263.200 5c-1.100-3-4-5-7.200-5s-6.100 2-7.200 5L234.700 42.700zM46.100 395.400c-18.700 18.700-18.700 49.100 0 67.900l34.600 34.600c18.700 18.700 49.100 18.700 67.900 0L529.900 116.500c18.700-18.700 18.700-49.100 0-67.900L495.300 14.100c-18.700-18.700-49.100-18.700-67.900 0L46.100 395.400zM484.600 82.600l-105 105-23.300-23.300 105-105 23.300 23.300zM7.500 117.200C3 118.900 0 123.200 0 128s3 9.100 7.500 10.800L64 160l21.200 56.500c1.700 4.500 6 7.500 10.800 7.500s9.100-3 10.800-7.500L128 160l56.500-21.200c4.500-1.700 7.500-6 7.500-10.800s-3-9.100-7.500-10.800L128 96 106.800 39.500C105.100 35 100.800 32 96 32s-9.100 3-10.800 7.500L64 96 7.500 117.200zm352 256c-4.500 1.700-7.500 6-7.500 10.800s3 9.100 7.500 10.800L416 416l21.200 56.500c1.700 4.500 6 7.500 10.800 7.500s9.100-3 10.800-7.500L480 416l56.500-21.200c4.500-1.700 7.500-6 7.500-10.800s-3-9.100-7.500-10.800L480 352l-21.200-56.500c-1.700-4.500-6-7.500-10.800-7.500s-9.100 3-10.800 7.500L416 352l-56.500 21.200z"/></svg></button>
            <label class="sr-only" for="message">消息</label>
            <textarea id="message" rows="1" class="flex-1 h-[51px] py-[9px] text-center resize outline-none placeholder:text-[#8a8a85]" placeholder="Type a message, or /? for help"></textarea>
            <button type="button" class="ml-3" aria-label="发送"><svg class="size-[45px]" viewBox="0 0 512 512" fill="currentColor"><path d="M498.100 5.600c10.100 7 15.400 19.100 13.500 31.200l-64 416c-1.500 9.700-7.400 18.200-16 23s-18.900 5.400-28 1.600L284 427.700l-68.500 74.100c-8.900 9.700-22.900 12.900-35.200 8.100S160 493.200 160 480V396.400c0-4 1.500-7.800 4.200-10.700L331.800 202.800c5.800-6.300 5.600-16-.4-22s-15.700-6.400-22-.7L106 360.800 17.700 316.600C7.100 311.300 .3 300.700 0 288.900s5.900-22.800 16.100-28.700l448-256c10.700-6.100 23.900-5.500 34 1.400z"/></svg></button>
        </form>

        <!-- API connections drawer -->
        <section class="absolute inset-x-0 top-[53px] px-2 pt-[9px] pb-2 border border-[#0c0c0c] rounded-[15px] bg-[#171717] shadow-[0_0_21px_#000]">
            <h2 class="mb-[3px] font-bold text-[26px]"><label for="api">API</label></h2>
            <div class="relative">
                <select id="api" class="block w-full h-[37px] px-2 appearance-none rounded-lg border border-[#070707] bg-[#101010] font-['Liberation_Sans','Noto_Sans_CJK_SC',sans-serif] text-[21px] leading-6"><option>Chat Completion</option></select>
                <svg class="absolute right-[7px] top-[14px] w-[14px] h-[9px] pointer-events-none"><use href="#i-down"/></svg>
            </div>
            <h3 class="mt-[15px] font-bold"><label for="source">聊天补全来源</label></h3>
            <div class="relative">
                <select id="source" class="block w-full h-[37px] px-2 appearance-none rounded-lg border border-[#070707] bg-[#101010] font-['Liberation_Sans','Noto_Sans_CJK_SC',sans-serif] text-[21px] leading-6"><option>Claude</option></select>
                <svg class="absolute right-[7px] top-[14px] w-[14px] h-[9px] pointer-events-none"><use href="#i-down"/></svg>
            </div>

            <div class="flex items-center justify-between h-[35px] mt-4">
                <h3 class="pb-[2px] font-bold">Reverse Proxy</h3>
                <button aria-label="收起"><svg class="size-[35px]" viewBox="0 0 35 35"><circle cx="17.500" cy="17.500" r="17.500" fill="#a3a39b"/><path d="M10.500 20.500l7-7 7 7" stroke="#171717" stroke-width="3" stroke-linecap="round" stroke-linejoin="round" fill="none"/></svg></button>
            </div>
            <label class="block mt-[7px] mb-px" for="preset">Proxy Presets</label>
            <p class="text-[19px] leading-[26px] text-[#85857f]">Saved addresses and passwords.</p>
            <div class="flex items-start mt-[6px]">
                <div class="relative flex-1">
                    <select id="preset" class="block w-full h-[37px] px-2 appearance-none rounded-lg border border-[#070707] bg-[#101010] font-['Liberation_Sans','Noto_Sans_CJK_SC',sans-serif] text-[21px] leading-6"><option>自建</option></select>
                    <svg class="absolute right-[7px] top-[14px] w-[14px] h-[9px] pointer-events-none"><use href="#i-down"/></svg>
                </div>
                <button class="flex items-center justify-center w-[37px] h-[34px] ml-[7px] rounded-lg bg-[#0a0a0a]" aria-label="保存"><svg class="h-6" viewBox="0 0 448 512" fill="currentColor"><path d="M64 32C28.700 32 0 60.700 0 96V416c0 35.300 28.700 64 64 64H384c35.300 0 64-28.700 64-64V173.300c0-17-6.700-33.300-18.700-45.300L352 50.700C340 38.700 323.700 32 306.700 32H64zm0 96c0-17.700 14.300-32 32-32H288c17.700 0 32 14.300 32 32v64c0 17.700-14.300 32-32 32H96c-17.700 0-32-14.300-32-32V128zM224 288a64 64 0 1 1 0 128 64 64 0 1 1 0-128z"/></svg></button>
                <button class="flex items-center justify-center w-9 h-[34px] ml-2 rounded-lg bg-[#0a0a0a]" aria-label="删除"><svg class="h-6" viewBox="0 0 448 512" fill="currentColor"><path d="M135.200 17.700L128 32H32C14.300 32 0 46.300 0 64S14.300 96 32 96H416c17.700 0 32-14.300 32-32s-14.300-32-32-32H320l-7.200-14.300C307.400 6.800 296.300 0 284.200 0H163.800c-12.100 0-23.200 6.800-28.600 17.700zM416 128H32L53.200 467c1.600 25.300 22.600 45 47.900 45H346.900c25.300 0 46.300-19.700 47.900-45L416 128z"/></svg></button>
            </div>

            <label class="block mt-[7px] mb-px" for="name">Proxy Name</label>
            <p class="text-[19px] leading-[26px] text-[#85857f]">This will show up as your saved preset.</p>
            <input id="name" class="block w-full h-[42px] mt-[7px] px-[7px] pb-[2px] rounded-lg border border-[#070707] bg-[#101010]" value="自建">

            <label class="block mt-[7px] mb-px" for="url">Proxy Server URL</label>
            <p class="text-[19px] leading-[26px] text-[#85857f]">备用服务器 URL（留空以使用默认值）。</p>
            <div class="flex flex-col h-20 mt-[7px] px-[5px] rounded-lg bg-[#050505] text-[19px] leading-[38px] font-bold text-[#e30d13]">
                <p>在键入任何内容之前，从 API 面板中删除您的真实 OAI API 密钥</p>
                <hr class="h-px mt-px mb-[3px] border-0 bg-linear-to-r from-transparent via-[#3c3c3c] to-transparent">
                <p>我们无法为使用非官方 OpenAI 代理时遇到的问题提供支持</p>
            </div>
            <input id="url" class="block w-full h-[42px] mt-[7px] px-[7px] pb-[2px] rounded-lg border border-[#070707] bg-[#101010]" value="http://127.0.0.1:8080/v1">
            <p class="mt-3 text-[19px] leading-[26px] text-[#a3a39b]">Doesn't work? Try adding <code class="inline-block -mx-[2px] px-[6px] rounded-md bg-[#070707] font-['DejaVu_Sans_Mono',monospace] text-[17px] leading-6">/v1</code> at the end!</p>

            <label class="block mb-px" for="password">Proxy Password</label>
            <p class="text-[19px] leading-[26px] text-[#85857f]">Will be used as a password for the proxy instead of API key.</p>
            <div class="flex gap-2 mt-[7px]">
                <input id="password" class="flex-1 h-[42px] px-[7px] pb-[2px] rounded-lg border border-[#070707] bg-[#101010]" value="111">
                <button class="flex items-center justify-center size-[42px] pb-1 rounded-lg bg-[#0a0a0a]" aria-label="显示密码"><svg class="w-[27px] h-6" viewBox="0 0 576 512" fill="currentColor"><path d="M288 32c-80.800 0-145.500 36.800-192.600 80.600C48.600 156 17.300 208 2.500 243.700c-3.300 7.900-3.300 16.700 0 24.600C17.300 304 48.600 356 95.400 399.400C142.500 443.200 207.200 480 288 480s145.500-36.800 192.600-80.600c46.800-43.500 78.100-95.400 93-131.100c3.300-7.900 3.300-16.700 0-24.600c-14.900-35.700-46.200-87.700-93-131.100C433.500 68.800 368.800 32 288 32zM144 256a144 144 0 1 1 288 0 144 144 0 1 1 -288 0zm144-64c0 35.300-28.700 64-64 64c-7.100 0-13.900-1.200-20.300-3.300c-5.500-1.800-11.900 1.600-11.700 7.400c.3 6.900 1.300 13.800 3.200 20.700c13.700 51.200 66.400 81.600 117.600 67.900s81.600-66.400 67.900-117.600c-11.100-41.500-47.800-69.400-88.600-71.100c-5.800-.2-9.200 6.100-7.400 11.700c2.100 6.400 3.300 13.200 3.300 20.300z"/></svg></button>
            </div>

            <h3 class="mt-[15px] font-bold"><label for="key">Claude API Key</label></h3>
            <p class="mt-[7px]">从以下位置获取您的密钥 <a href="#" class="text-[#f39c12]">Anthropic的开发者控制台</a>.</p>
            <p class="font-bold">Slack和Poe的cookie在这里不起作用，请不要尝试。</p>
            <div class="flex gap-2 mt-[7px]">
                <div class="flex items-center flex-1 h-[42px] px-3 rounded-lg border border-[#070707] bg-[#101010]">
                    <svg class="w-[22px] h-[25px] mt-[5px]" viewBox="0 0 448 512"><path fill="#7b5bd0" stroke="#7b5bd0" stroke-width="30" d="M438.600 105.400c12.500 12.500 12.500 32.800 0 45.300l-256 256c-12.500 12.500-32.800 12.500-45.300 0l-128-128c-12.500-12.500-12.500-32.800 0-45.300s32.800-12.500 45.300 0L160 338.700 393.400 105.400c12.500-12.500 32.800-12.500 45.300 0z"/></svg>
                    <input id="key" class="flex-1 ml-[10px] outline-none placeholder:text-[#85857f]" placeholder="Key saved">
                </div>
                <button class="flex items-center justify-center w-[39px] h-[42px] pb-[3px] rounded-lg bg-[#0a0a0a]" aria-label="清除"><svg class="size-6" viewBox="0 0 24 24"><circle cx="12" cy="12" r="12" fill="currentColor"/><path d="M9 9l6 6M15 9l-6 6" stroke="#0a0a0a" stroke-width="2.200" stroke-linecap="round"/></svg></button>
            </div>

            <h3 class="mt-4 font-bold"><label for="model">Claude模型</label></h3>
            <div class="relative mt-[7px]">
                <select id="model" class="block w-full h-[37px] px-2 appearance-none rounded-lg border border-[#070707] bg-[#101010] font-['Liberation_Sans','Noto_Sans_CJK_SC',sans-serif] text-[21px] leading-6"><option>claude-3-opus-20240229</option></select>
                <svg class="absolute right-[7px] top-[14px] w-[14px] h-[9px] pointer-events-none"><use href="#i-down"/></svg>
            </div>
            <div class="flex gap-[7px] mt-[15px]">
                <button class="h-[42px] px-[9px] rounded-lg bg-[#0a0a0a]">连接</button>
                <button class="h-[42px] px-[7px] rounded-lg bg-[#0a0a0a] text-[21px]">发送测试消息</button>
            </div>
            <div class="flex items-center mt-3 text-[#b0b0a8]">
                <span class="size-[21px] mr-[13px] rounded-full bg-[#1f6f0a]"></span>
                Unable to verify key; press "Test Message" to validate.
            </div>
            <div class="flex items-center mt-[22px]">
                <input id="auto" type="checkbox" class="appearance-none size-[21px] ml-[6px] rounded-[3px] border border-[#8a8a85] bg-white">
                <label class="flex-1 ml-[13px]" for="auto">自动连接到上次的服务器</label>
                <a href="#" class="text-[#f39c12]">查看隐藏的API密钥</a>
            </div>
        </section>

        <!-- toasts -->
        <div class="absolute left-1/2 -translate-x-1/2 top-[53px] flex flex-col gap-[9px] w-[450px] text-[#d2d2cf]">
            <div class="relative flex items-center h-[138px] pl-6 pr-4 rounded-[5px] bg-[#93302d] shadow-[0_0_18px_#8a8a8a]">
                <svg class="w-[33px] h-9 shrink-0"><use href="#i-shield"/></svg>
                <p class="flex-1 ml-[18px] pb-[3px] text-shadow-sm">Could not get a reply from API.<br>Check your connection settings /<br>API key and try again.</p>
                <button class="absolute right-[15px] top-[20px]" aria-label="关闭通知"><svg class="w-4 h-[17px] text-[#c9adac]"><use href="#i-x"/></svg></button>
            </div>
            <div class="relative flex items-center h-[107px] pl-6 pr-4 rounded-[5px] bg-[#93302d] shadow-[0_0_18px_#8a8a8a]">
                <svg class="w-[33px] h-9 shrink-0"><use href="#i-shield"/></svg>
                <p class="flex-1 ml-[18px] pb-[3px] text-shadow-sm"><b>Chat Completion API</b><br>Internal Server Error</p>
                <button class="absolute right-[15px] top-[20px]" aria-label="关闭通知"><svg class="w-4 h-[17px] text-[#c9adac]"><use href="#i-x"/></svg></button>
            </div>
        </div>
    </main>
    <div class="shrink-0 h-[2px] bg-[#b3aeac]"></div>
</body>
</html>
